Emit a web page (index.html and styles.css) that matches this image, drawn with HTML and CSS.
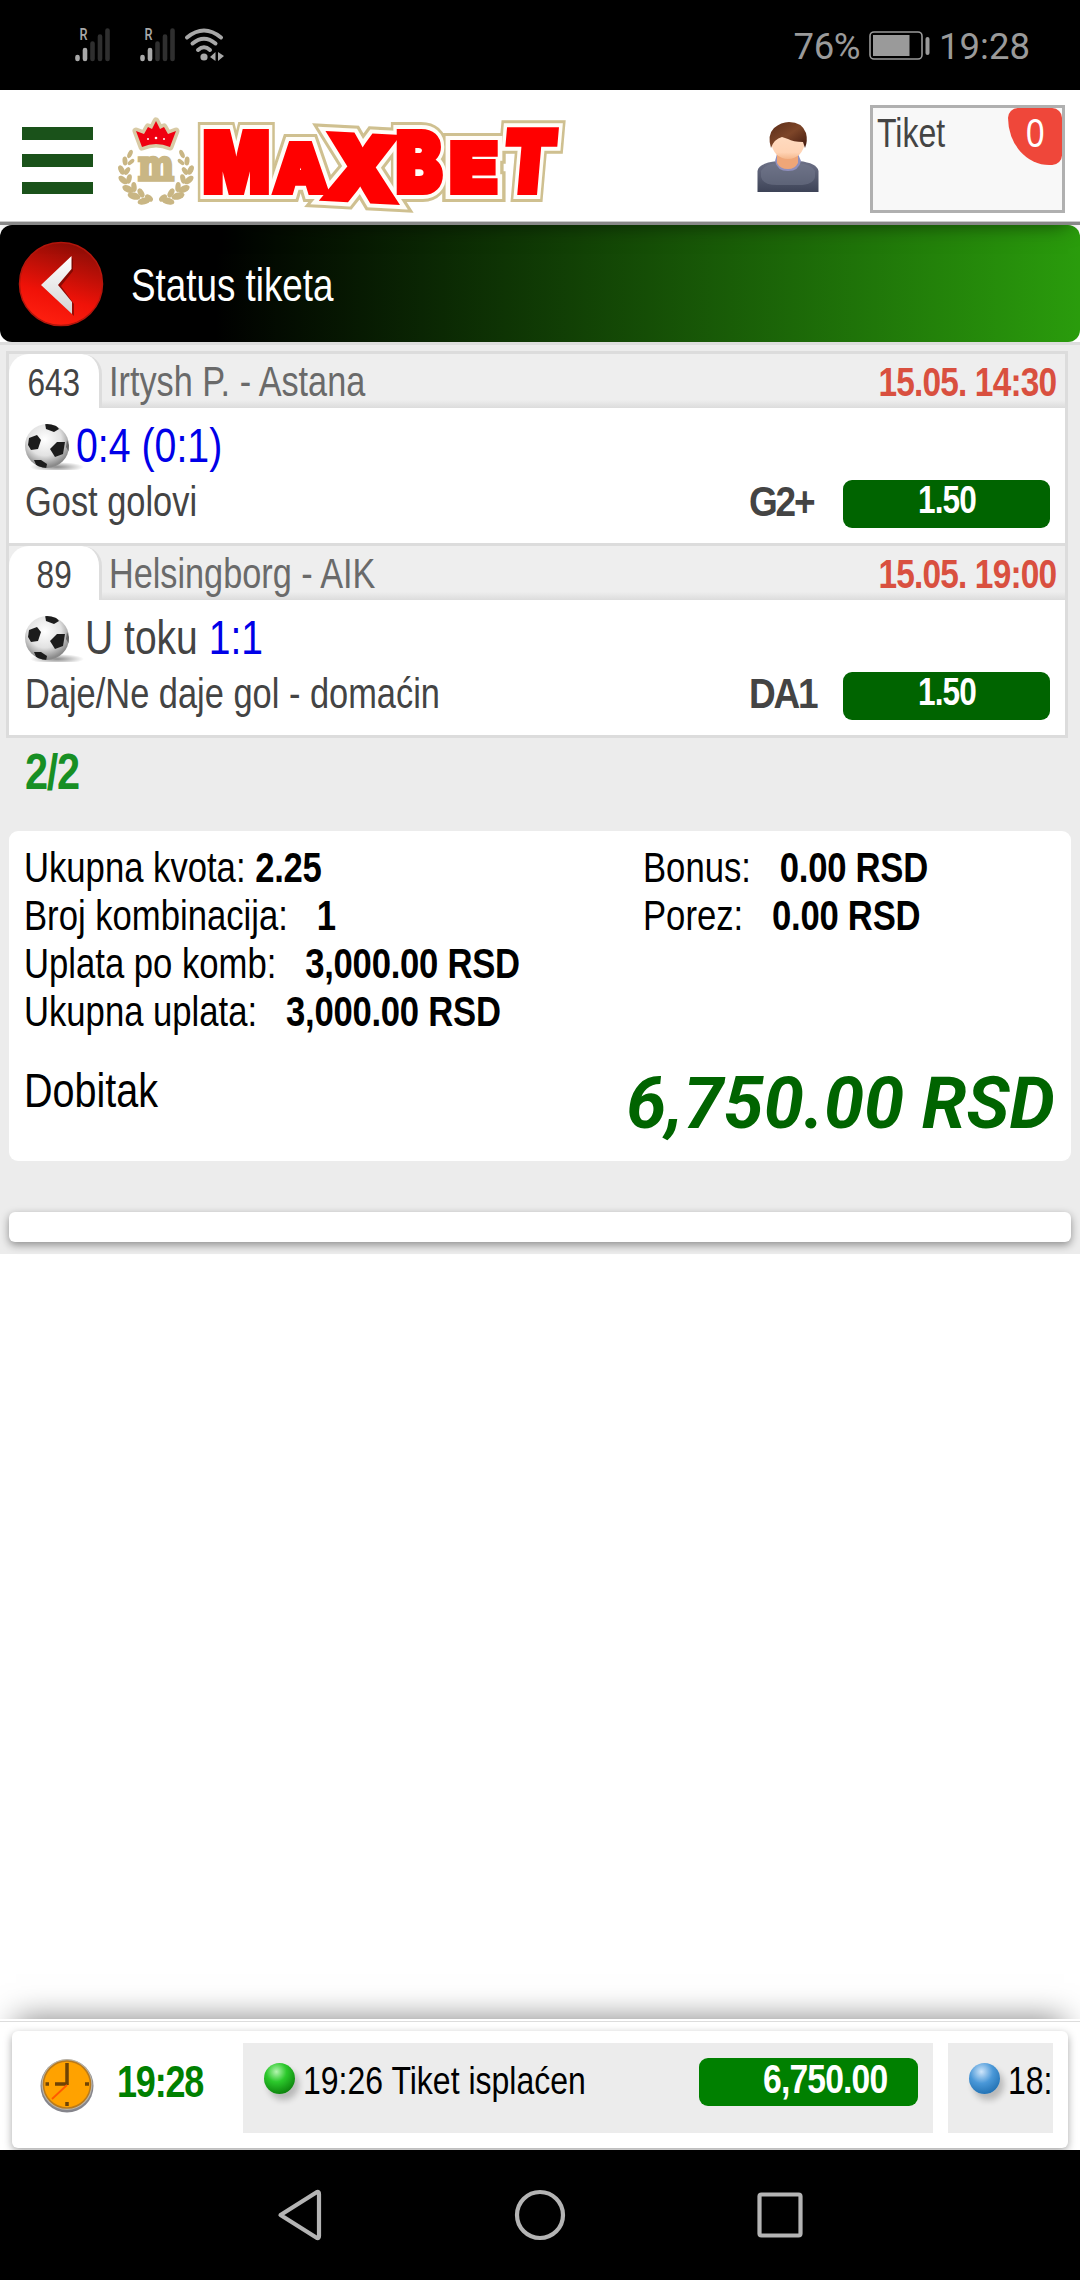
FILE: index.html
```html
<!DOCTYPE html>
<html lang="sr">
<head>
    <meta charset="utf-8">
    <title>Status tiketa</title>
    <link rel="stylesheet" href="styles.css">
</head>
<body>
<svg width="0" height="0" class="defs">
    <defs>
        <radialGradient id="ballFill" cx="45%" cy="35%" r="62%">
            <stop offset="0" stop-color="#fff"/>
            <stop offset="0.6" stop-color="#e2e2e2"/>
            <stop offset="1" stop-color="#8a8a8a"/>
        </radialGradient>
        <radialGradient id="shadowFill">
            <stop offset="0" stop-color="#000" stop-opacity="0.45"/>
            <stop offset="1" stop-color="#000" stop-opacity="0"/>
        </radialGradient>
        <clipPath id="ballClip"><circle cx="22" cy="23" r="22"/></clipPath>
        <symbol id="ball" viewBox="0 0 60 47">
            <ellipse cx="32" cy="44" rx="27" ry="5" fill="url(#shadowFill)"/>
            <circle cx="22" cy="23" r="22" fill="url(#ballFill)"/>
            <g clip-path="url(#ballClip)" fill="#1c1c1c">
                <path d="M20 0L30 1L34 6L29 9L21 6Z"/>
                <path d="M4 15L12 12L16 17L13 26L6 27L3 22Z"/>
                <path d="M32 19L40 19L38 31L30 34L25 26Z"/>
                <path d="M9 37L16 37L22 41L21 46L12 44Z"/>
                <path d="M42 17L44 22L44 29L41 24Z" fill="#666"/>
            </g>
        </symbol>
    </defs>
</svg>

<div class="statusbar">
    <svg class="signals" width="160" height="90" viewBox="70 0 160 90">
        <g id="signal">
            <g stroke-width="4.6" stroke-linecap="round">
                <path d="M77.500 57V59M85 50V59" stroke="#a8a8a8"/>
                <path d="M92.500 43.500V59M100 36.500V59M107.500 30.500V59" stroke="#2f2f2f"/>
            </g>
            <text x="79.500" y="40" class="roaming" textLength="8" lengthAdjust="spacingAndGlyphs">R</text>
        </g>
        <use href="#signal" x="65"/>
        <g fill="none" stroke="#a8a8a8" stroke-width="4" stroke-linecap="round">
            <path d="M187 37.500Q204 23.500 221 37.500"/>
            <path d="M192.500 43.500Q204 34 215.500 43.500"/>
            <path d="M198 50Q204 44.500 210 50"/>
        </g>
        <circle cx="204" cy="57" r="3.600" fill="#a8a8a8"/>
        <path d="M210 57L215.500 52V61ZM218 52V61L224 56Z" fill="#a8a8a8"/>
    </svg>
    <span class="battery-text">76%</span>
    <svg class="battery" width="62" height="30" viewBox="0 0 62 30">
        <rect x="1" y="1" width="52" height="27" rx="4" fill="none" stroke="#9a9a9a" stroke-width="1.600"/>
        <rect x="4" y="4" width="36.500" height="21" fill="#9a9a9a"/>
        <rect x="56.500" y="6" width="4" height="18" rx="2" fill="#9a9a9a"/>
    </svg>
    <span class="time">19:28</span>
</div>

<div class="header">
    <div class="menu"><i></i><i></i><i></i></div>
    <svg class="logo" width="455" height="100" viewBox="115 112 455 100">
        <defs>
            <g id="word">
                <text transform="translate(203 192) scale(0.840 1)" font-size="83">M</text>
                <text transform="translate(274 192) scale(1.020 1)" font-size="66">A</text>
                <text transform="translate(323 198) rotate(3) scale(1.060 1)" font-size="88">X</text>
                <text transform="translate(396 192) scale(0.830 1)" font-size="83">B</text>
                <text transform="translate(450 192) scale(1.140 1)" font-size="68">E</text>
                <text transform="translate(502 192) skewX(-5) scale(0.870 1)" font-size="85">T</text>
            </g>
        </defs>
        <g fill="#c9b684">
            <g id="laurel">
                <ellipse cx="130" cy="154" rx="2.200" ry="4.500" transform="rotate(25 130 154)"/>
                <ellipse cx="125" cy="161" rx="2.500" ry="4.500" transform="rotate(-5 125 161)"/>
                <ellipse cx="131" cy="162" rx="2" ry="4" transform="rotate(50 131 162)"/>
                <ellipse cx="121.500" cy="170" rx="2.800" ry="5" transform="rotate(-25 121.500 170)"/>
                <ellipse cx="127" cy="171" rx="2.400" ry="4.300" transform="rotate(35 127 171)"/>
                <ellipse cx="123" cy="180" rx="3" ry="5.500" transform="rotate(-48 123 180)"/>
                <ellipse cx="129" cy="179" rx="2.600" ry="4.800" transform="rotate(15 129 179)"/>
                <ellipse cx="128" cy="189" rx="3.400" ry="6" transform="rotate(-65 128 189)"/>
                <ellipse cx="134" cy="187" rx="2.700" ry="5" transform="rotate(-5 134 187)"/>
                <ellipse cx="134" cy="196" rx="3.600" ry="6.500" transform="rotate(-75 134 196)"/>
                <ellipse cx="141" cy="193" rx="2.800" ry="5" transform="rotate(-30 141 193)"/>
                <ellipse cx="144" cy="201" rx="3.400" ry="6.500" transform="rotate(-105 144 201)"/>
                <ellipse cx="149" cy="198" rx="2.800" ry="4.500" transform="rotate(-50 149 198)"/>
            </g>
            <use href="#laurel" transform="translate(312 0) scale(-1 1)"/>
        </g>
        <path d="M142 147L136 131L144 134L148 127L152 129L156 121L160 129L164 127L168 134L176 131L170 147Q156 141 142 147Z" fill="#f00010" stroke="#d9cba6" stroke-width="7" paint-order="stroke" stroke-linejoin="round"/>
        <g fill="#fff"><circle cx="156" cy="138" r="1.300"/><circle cx="148" cy="139" r="1"/><circle cx="164" cy="139" r="1"/></g>
        <text class="logo-m" x="138" y="180" textLength="36" lengthAdjust="spacingAndGlyphs">m</text>
        <use href="#word" class="word outline"/>
        <use href="#word" class="word inner"/>
        <use href="#word" class="word face"/>
    </svg>
    <svg class="user" width="62" height="72" viewBox="0 0 62 72">
        <defs>
            <linearGradient id="shirt" x1="0" y1="0" x2="0" y2="1"><stop offset="0" stop-color="#6d7187"/><stop offset="1" stop-color="#3d4357"/></linearGradient>
            <linearGradient id="skin" x1="0" y1="0" x2="0" y2="1"><stop offset="0" stop-color="#ffe0c8"/><stop offset="0.800" stop-color="#ffd3b4"/><stop offset="1" stop-color="#f5b78c"/></linearGradient>
            <linearGradient id="hair" x1="0" y1="0" x2="1" y2="1"><stop offset="0" stop-color="#5a2c18"/><stop offset="0.500" stop-color="#7d4528"/><stop offset="1" stop-color="#40180e"/></linearGradient>
        </defs>
        <path d="M0.500 71V50Q2 42 20 40H42Q60 42 61.500 50V71Z" fill="url(#shirt)"/>
        <path d="M4 50Q8 43 20 42H42Q54 43 58 50V56Q56 64 42 64H20Q6 64 4 56Z" fill="#74798d" opacity="0.500"/>
        <path d="M18 40Q20 50 31 50Q42 50 44 40L41 33H20Z" fill="#8f8fbe"/>
        <path d="M20 34H41V42Q38 48 31 48Q23 48 20 42Z" fill="#efa678"/>
        <ellipse cx="31" cy="21.500" rx="16.500" ry="16.500" fill="url(#skin)"/>
        <path d="M14 27Q10 14 17 7Q24 1 32 1Q45 1 49 12Q51 20 48 27L46 21Q36 21 31 18L25 16Q17 18 14 27Z" fill="url(#hair)"/>
    </svg>
    <div class="ticket">
        <span class="nw ticket-label">Tiket</span>
        <span class="badge"><span class="nw mid">0</span></span>
    </div>
</div>

<div class="titlebar">
    <svg width="86" height="86" viewBox="18 242 86 86">
        <defs><linearGradient id="red" x1="0.650" y1="0" x2="0.350" y2="1"><stop offset="0" stop-color="#8a0d06"/><stop offset="0.650" stop-color="#f01208"/><stop offset="1" stop-color="#ff2010"/></linearGradient>
        <linearGradient id="arrow" x1="0" y1="0" x2="0" y2="1"><stop offset="0" stop-color="#fff"/><stop offset="1" stop-color="#d4d4d4"/></linearGradient></defs>
        <circle cx="61" cy="285" r="41.500" fill="url(#red)" stroke="#b5160c" stroke-width="1.500"/>
        <path d="M73 259L44 287L74 317V305L61 287L73 272Z" fill="#5c0500" opacity="0.600"/>
        <path d="M71.500 257L41 286L72 315V303L58 286L71.500 270Z" fill="url(#arrow)"/>
    </svg>
    <span class="nw title">Status tiketa</span>
</div>

<div class="page">
    <div class="matches">
        <div class="match">
            <div class="match-head">
                <div class="code"><span class="nw mid">643</span></div>
                <span class="nw teams">Irtysh P. - Astana</span>
                <span class="nw date">15.05. 14:30</span>
            </div>
            <div class="score-row">
                <svg class="ball" width="60" height="47"><use href="#ball"/></svg>
                <span class="nw score"><b>0:4 (0:1)</b></span>
            </div>
            <div class="market-row">
                <span class="nw market">Gost golovi</span>
                <span class="nw pick">G2+</span>
                <div class="odd"><span class="nw mid">1.50</span></div>
            </div>
        </div>
        <div class="match">
            <div class="match-head">
                <div class="code"><span class="nw mid">89</span></div>
                <span class="nw teams">Helsingborg - AIK</span>
                <span class="nw date">15.05. 19:00</span>
            </div>
            <div class="score-row live">
                <svg class="ball" width="60" height="47"><use href="#ball"/></svg>
                <span class="nw score">U toku <b>1:1</b></span>
            </div>
            <div class="market-row">
                <span class="nw market">Daje/Ne daje gol - domaćin</span>
                <span class="nw pick">DA1</span>
                <div class="odd"><span class="nw mid">1.50</span></div>
            </div>
        </div>
    </div>
    <div class="hits"><span class="nw">2/2</span></div>

    <div class="summary">
        <div class="sums">
            <div class="col-left">
                <div><span class="nw">Ukupna kvota: <b>2.25</b></span></div>
                <div><span class="nw">Broj kombinacija: &nbsp; <b>1</b></span></div>
                <div><span class="nw">Uplata po komb: &nbsp; <b>3,000.00 RSD</b></span></div>
                <div><span class="nw">Ukupna uplata: &nbsp; <b>3,000.00 RSD</b></span></div>
            </div>
            <div class="col-right">
                <div><span class="nw">Bonus: &nbsp; <b>0.00 RSD</b></span></div>
                <div><span class="nw">Porez: &nbsp; <b>0.00 RSD</b></span></div>
            </div>
        </div>
        <div class="win">
            <span class="nw win-label">Dobitak</span>
            <span class="win-amount">6,750.00 RSD</span>
        </div>
    </div>
    <div class="strip"></div>
</div>

<div class="footer">
    <div class="ticker">
        <svg class="clock" width="56" height="56" viewBox="0 0 56 56">
            <circle cx="28" cy="29" r="26.500" fill="#85858c"/>
            <circle cx="28" cy="27.500" r="25.500" fill="#b9b2a4"/>
            <circle cx="28" cy="27.500" r="23.500" fill="#ffa200" stroke="#b97a1c" stroke-width="1.500"/>
            <path d="M28 6V28M16 27H28" stroke="#6e4304" stroke-width="3.500"/>
            <path d="M28 45V49M6.500 27H10M46 27H50" stroke="#6e4304" stroke-width="3.500"/>
            <path d="M28 28L13 42" stroke="#ff5a00" stroke-width="1.800"/>
        </svg>
        <span class="nw clock-time">19:28</span>
        <div class="item">
            <i class="dot green"></i>
            <span class="nw item-text">19:26 Tiket isplaćen</span>
            <div class="payout"><span class="nw">6,750.00</span></div>
        </div>
        <div class="item cut">
            <i class="dot blue"></i>
            <span class="nw item-text">18:</span>
        </div>
    </div>
</div>

<div class="navbar">
    <svg width="540" height="60" viewBox="270 2185 540 60" fill="none" stroke="#b4b4b4" stroke-width="4.200" stroke-linejoin="round">
        <path d="M280.500 2215L317 2192Q319 2191.500 319 2194V2236Q319 2238.500 317 2238Z"/>
        <circle cx="540" cy="2215" r="23"/>
        <rect x="759.500" y="2194.500" width="41" height="41" rx="2"/>
    </svg>
</div>
</body>
</html>
```
FILE: styles.css
```css
* {
    box-sizing: border-box;
}

body {
    margin: 0;
    width: 1080px;
    height: 2280px;
    display: flex;
    flex-direction: column;
    overflow: hidden;
    background: #fff;
    font-family: "Liberation Sans", Arial, sans-serif;
    color: #000;
}

.defs {
    position: absolute;
}

/* narrow text */
.nw {
    display: inline-block;
    white-space: nowrap;
    transform: scaleX(.83);
    transform-origin: left center;
}

.nw.mid {
    transform-origin: center;
}

.statusbar {
    height: 90px;
    flex: none;
    background: #000;
    color: #9a9a9a;
    display: flex;
    align-items: center;
    padding: 0 50px 0 70px;
    font: 36.5px/90px Roboto, sans-serif;
}

.signals {
    margin-right: auto;
}

.roaming {
    font: 500 16px Roboto, sans-serif;
    fill: #a8a8a8;
}

.battery {
    margin: 2px 8px 0 9px;
}

.battery-text,
.time {
    padding-top: 3px;
}

.battery-text {
    letter-spacing: -.4px;
}

.header {
    height: 132px;
    flex: none;
    display: flex;
    align-items: flex-start;
    background: #fff;
    padding-left: 22px;
    border-bottom: 1px solid #ccc;
    box-shadow: 0 3px 0 #888, 0 14px 20px -12px rgba(0, 0, 0, .6);
    position: relative;
}

.menu {
    width: 71px;
    height: 67px;
    margin-top: 37px;
    display: flex;
    flex-direction: column;
    justify-content: space-between;
}

.menu i {
    height: 12.5px;
    background: #1a521a;
}

.logo {
    margin: 22px 0 0 22px;
    overflow: visible;
}

.logo-m {
    font: bold 42px "DejaVu Serif", serif;
    fill: #c9b684;
    stroke: #c9b684;
    stroke-width: 3.5px;
}

.word {
    font-family: Inter, sans-serif;
    font-weight: 900;
    stroke-linejoin: miter;
    stroke-miterlimit: 3;
}

.outline {
    fill: #cfc090;
    stroke: #cfc090;
    stroke-width: 20px;
}

.inner {
    fill: #fff;
    stroke: #fffdf8;
    stroke-width: 14px;
}

.face {
    fill: #f00;
    stroke: #f00;
    stroke-width: 6px;
}

.user {
    margin: 31px 51px 0 auto;
}

.ticket {
    width: 195px;
    height: 108px;
    margin: 15px 15px 0 0;
    border: 3px solid #b0b0b0;
    background: #f8f8f8;
    display: flex;
    justify-content: space-between;
    font-size: 40px;
    line-height: 50px;
    color: #444;
}

.ticket-label {
    margin-left: 4px;
    transform: scaleX(.8);
}

.badge {
    width: 54px;
    height: 57px;
    background: #ef473a;
    border-radius: 10px 10px 10px 42px / 10px 10px 10px 48px;
    text-align: center;
    color: #fff;
}

.titlebar {
    height: 117px;
    margin-top: 3px;
    flex: none;
    display: flex;
    align-items: center;
    padding-left: 18px;
    border-radius: 12px;
    background: linear-gradient(to right, #000 20%, #2a9c0c);
}

.title {
    margin: 2px 0 0 27px;
    font-size: 46px;
    color: #fff;
    transform: scaleX(.8);
}

.page {
    height: 912px;
    flex: none;
    background: #ececec;
    border-top: 3px solid #ddd;
    padding: 6px 9px 0 6px;
}

.matches {
    width: 1062px;
    border: 3px solid #dcdcdc;
    background: #fff;
}

.match + .match {
    border-top: 3px solid #dcdcdc;
}

.match-head {
    height: 54px;
    display: flex;
    align-items: center;
    background: linear-gradient(#eee 85%, #dcdcdc);
    line-height: 58px;
    font-size: 42px;
}

.code {
    width: 93px;
    height: 54px;
    background: #fff;
    border-right: 3px solid #ddd;
    border-radius: 20px 20px 0 0;
    text-align: center;
    color: #444;
    font-size: 38px;
    line-height: 58px;
}

.teams {
    margin: 2px 0 0 7px;
    color: #6a6a6a;
    transform: scaleX(.815);
}

.date {
    margin-top: 2px;
    margin-left: auto;
    margin-right: 9px;
    font-weight: bold;
    font-size: 41px;
    letter-spacing: -1px;
    color: #d9503f;
    transform: scaleX(.815);
    transform-origin: right center;
}

.score-row {
    height: 72px;
    padding: 1px 0 0 16px;
    display: flex;
    align-items: center;
    font-size: 48.5px;
    line-height: 72px;
    color: #444;
}

.ball {
    margin-top: 3px;
}

.score {
    margin-left: -9px;
    transform: scaleX(.81);
}

.live .score {
    margin-left: 0;
    transform: scaleX(.805);
}

.score b {
    font-weight: normal;
    color: #0000e8;
}

.market-row {
    height: 63px;
    padding: 0 15px 0 16px;
    display: flex;
    align-items: flex-start;
    font-size: 43px;
    line-height: 43px;
    color: #444;
}

.market {
    transform: scaleX(.8);
}

.pick {
    width: 94px;
    margin-left: auto;
    font-weight: bold;
    letter-spacing: -2.5px;
    transform: scaleX(.86);
}

.odd {
    width: 207px;
    height: 48px;
    border-radius: 9px;
    background: #006400;
    color: #fff;
    font-size: 38px;
    font-weight: bold;
    letter-spacing: -1px;
    line-height: 41px;
    text-align: center;
}

.hits {
    height: 93px;
    padding-left: 19px;
    font-size: 50px;
    font-weight: bold;
    letter-spacing: -1.5px;
    line-height: 69px;
    color: #178f24;
}

.summary {
    width: 1062px;
    height: 330px;
    margin-left: 3px;
    padding: 13px 15px 0;
    background: #fff;
    border-radius: 9px;
}

.sums {
    display: flex;
    font-size: 42px;
    line-height: 48px;
}

.sums .nw {
    transform: scaleX(.825);
}

.sums b {
    letter-spacing: -.3px;
}

.col-left {
    width: 619px;
}

.win {
    display: flex;
    justify-content: space-between;
}

.win-label {
    margin-top: 24px;
    font-size: 48.5px;
    line-height: 60px;
    transform: scaleX(.815);
}

.win-amount {
    margin-top: 28px;
    margin-right: 1px;
    font: italic bold 72px/80px Roboto, sans-serif;
    color: #006400;
}

.strip {
    width: 1062px;
    height: 30px;
    margin: 51px 0 0 3px;
    background: #fff;
    border-radius: 6px;
    box-shadow: 0 3px 9px rgba(0, 0, 0, .4);
}

.footer {
    height: 131px;
    margin-top: auto;
    flex: none;
    background: #fff;
    padding: 12px 12px 0;
    box-shadow: 0 -16px 30px -16px rgba(0, 0, 0, .5);
    background-image: linear-gradient(#fff 2px, #ddd 2px, #ddd 3px, #fff 3px);
}

.ticker {
    height: 117px;
    padding: 12px 15px 0 27px;
    display: flex;
    border-radius: 6px;
    background: #fff;
    box-shadow: 0 3px 9px rgba(0, 0, 0, .35);
}

.clock {
    margin-top: 14px;
}

.clock-time {
    width: 125px;
    margin-left: 22px;
    font-size: 45px;
    font-weight: bold;
    letter-spacing: -1.5px;
    line-height: 77px;
    color: green;
    transform: scaleX(.8);
}

.item {
    width: 690px;
    height: 90px;
    margin-left: 1px;
    padding-left: 20px;
    background: #ececec;
    display: flex;
    overflow: hidden;
    font-size: 39.5px;
    line-height: 75px;
}

.item.cut {
    width: 105px;
    margin-left: 15px;
}

.item-text {
    transform: scaleX(.81);
}

.dot {
    flex: none;
    width: 31px;
    height: 31px;
    margin: 20px 8px 0 1px;
    border-radius: 50%;
    box-shadow: 4px 6px 6px rgba(0, 0, 0, .22);
}

.dot.green {
    background: radial-gradient(circle at 40% 28%, #b4f5b0, #2cc92c 35%, #087808 85%);
}

.dot.blue {
    background: radial-gradient(circle at 40% 28%, #cfe6fb, #4a98d8 40%, #1c6cae 85%);
}

.payout {
    width: 219px;
    height: 48px;
    margin: 15px 15px 0 auto;
    padding-left: 64px;
    border-radius: 9px;
    background: green;
    color: #fff;
    font-size: 41px;
    font-weight: bold;
    letter-spacing: -1px;
    line-height: 43px;
}

.payout .nw {
    transform: scaleX(.82);
}

.navbar {
    height: 130px;
    flex: none;
    background: #000;
    display: flex;
    align-items: center;
    justify-content: center;
    position: relative;
}
```
